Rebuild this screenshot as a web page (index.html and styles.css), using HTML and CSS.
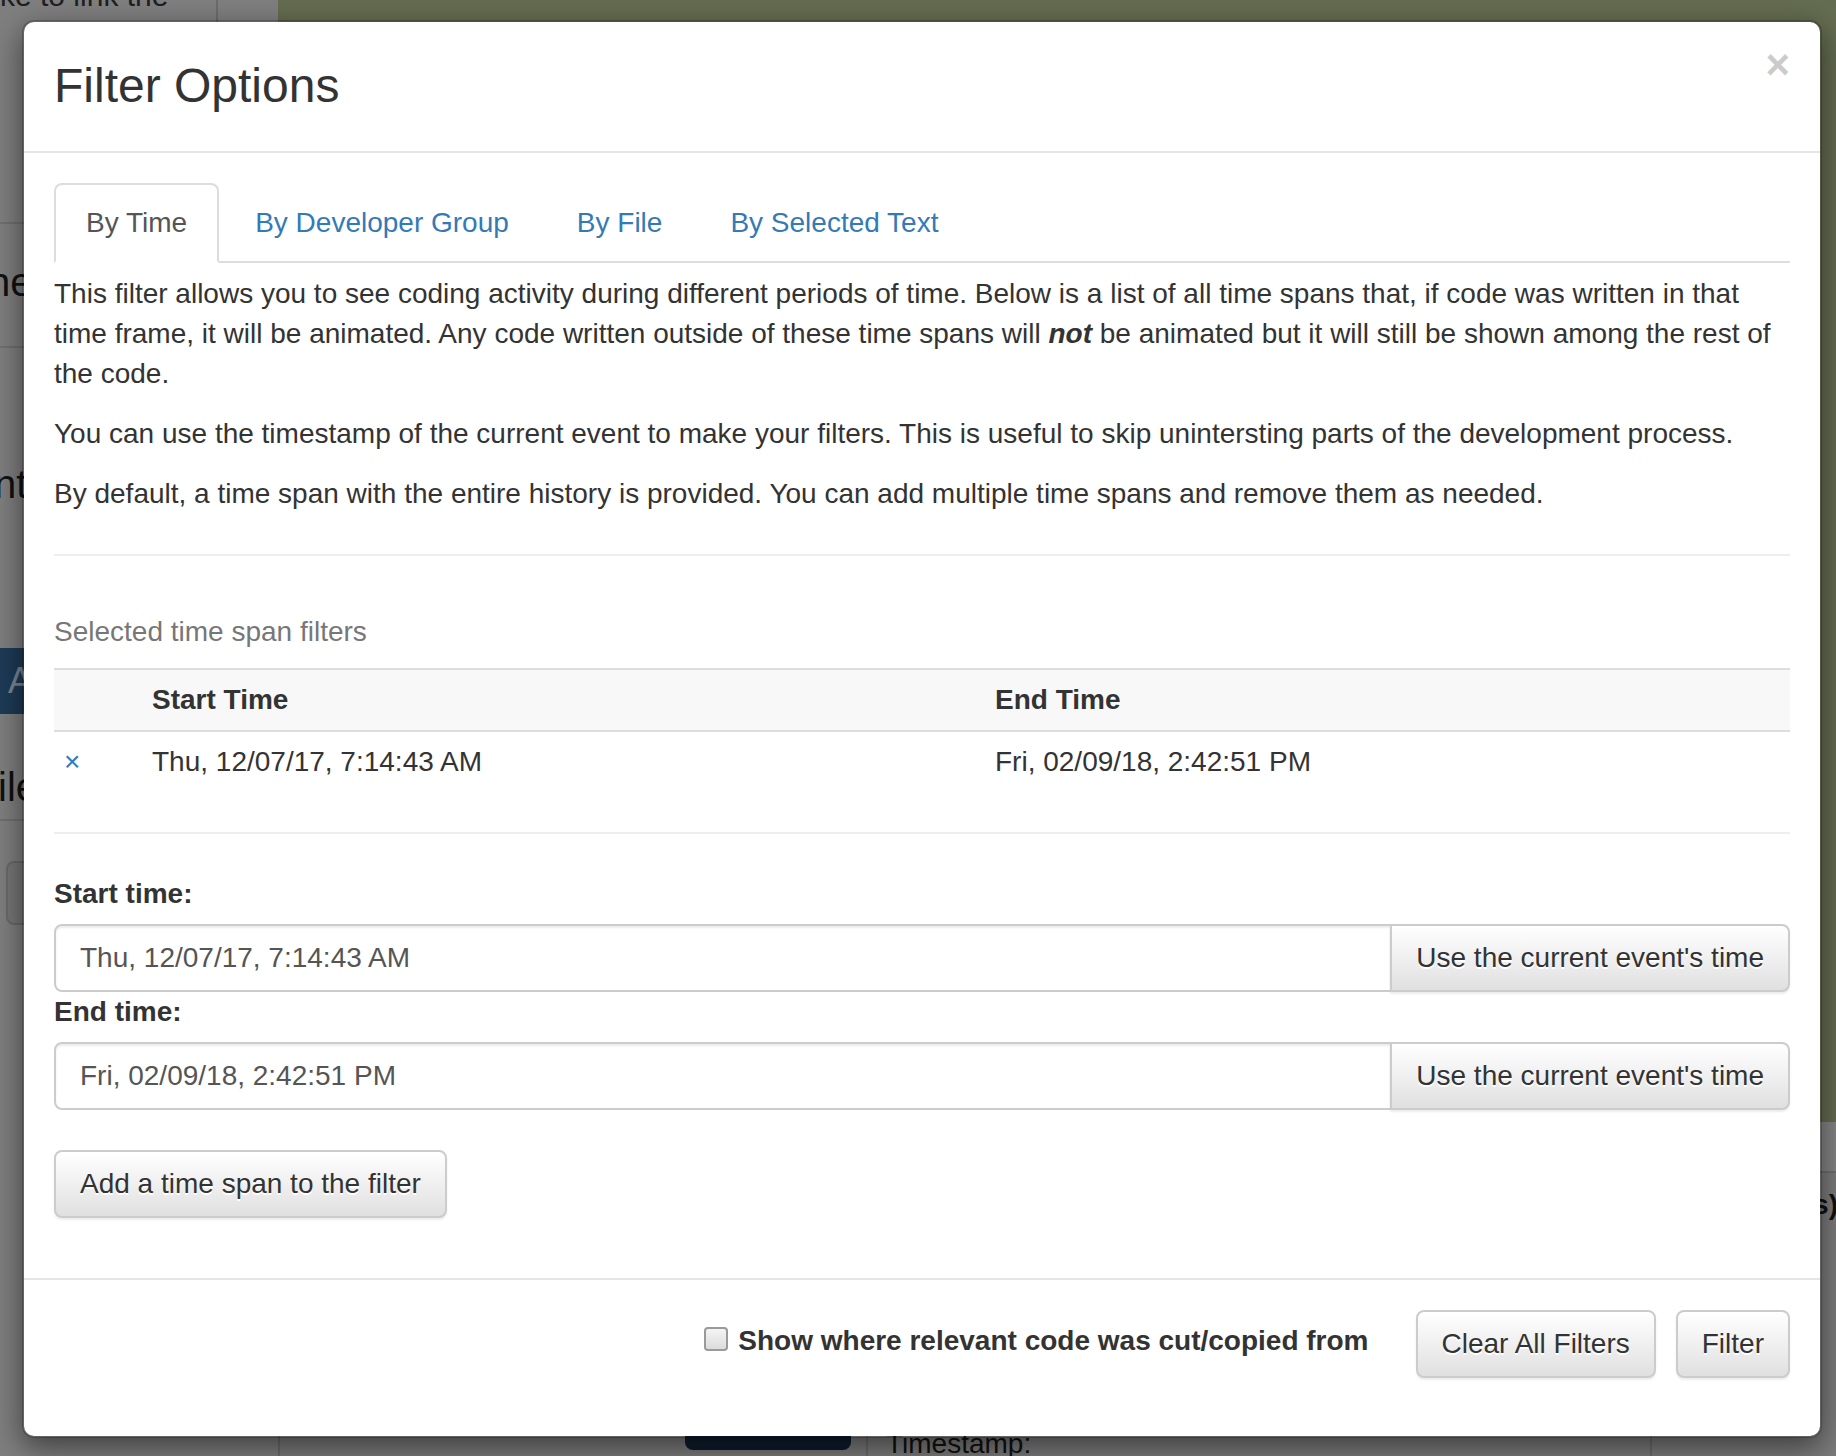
FILE: index.html
```html
<!DOCTYPE html>
<html lang="en">
<head>
<meta charset="utf-8">
<title>Filter Options</title>
<link rel="stylesheet" href="styles.css">
</head>
<body>
<div class="page">
  <aside class="side">
    <div class="side-top">
      <div class="side-field"><span class="side-note">ke to link the</span></div>
    </div>
    <div class="side-item side-item-a">ne</div>
    <div class="side-item side-item-b">nt</div>
    <div class="side-bar">A</div>
    <div class="side-item side-item-c">ile</div>
    <div class="side-btn"></div>
  </aside>
  <main class="main">
    <div class="editor"></div>
    <div class="panel">
      <div class="panel-head"></div>
      <div class="panel-body"><span class="panel-title">Selected Event(s)</span></div>
      <div class="panel-foot">
        <div class="foot-col foot-a"><span class="navy-btn"></span></div>
        <div class="foot-col foot-b">Timestamp:</div>
        <div class="foot-col foot-c"></div>
      </div>
    </div>
  </main>
</div>

<div class="backdrop">
  <div class="modal">
    <div class="modal-header">
      <h3 class="modal-title">Filter Options</h3>
      <button class="close" type="button">&times;</button>
    </div>
    <div class="modal-body">
      <ul class="nav-tabs">
        <li class="active"><a href="#">By Time</a></li>
        <li><a href="#">By Developer Group</a></li>
        <li><a href="#">By File</a></li>
        <li><a href="#">By Selected Text</a></li>
      </ul>
      <div class="tab-content">
        <p>This filter allows you to see coding activity during different periods of time. Below is a list of all time spans that, if code was written in that time frame, it will be animated. Any code written outside of these time spans will <b><i>not</i></b> be animated but it will still be shown among the rest of the code.</p>
        <p>You can use the timestamp of the current event to make your filters. This is useful to skip unintersting parts of the development process.</p>
        <p>By default, a time span with the entire history is provided. You can add multiple time spans and remove them as needed.</p>
        <hr class="rule">
        <table class="spans">
          <caption>Selected time span filters</caption>
          <colgroup>
            <col class="col-x">
            <col class="col-start">
            <col>
          </colgroup>
          <thead>
            <tr><th></th><th>Start Time</th><th>End Time</th></tr>
          </thead>
          <tbody>
            <tr><td><a href="#" class="remove">&times;</a></td><td>Thu, 12/07/17, 7:14:43 AM</td><td>Fri, 02/09/18, 2:42:51 PM</td></tr>
          </tbody>
        </table>
        <hr class="rule">
        <label class="field-label">Start time:</label>
        <div class="input-group">
          <input class="form-control" type="text" value="Thu, 12/07/17, 7:14:43 AM">
          <button class="btn btn-addon" type="button">Use the current event's time</button>
        </div>
        <label class="field-label">End time:</label>
        <div class="input-group">
          <input class="form-control" type="text" value="Fri, 02/09/18, 2:42:51 PM">
          <button class="btn btn-addon" type="button">Use the current event's time</button>
        </div>
        <div class="add-row">
          <button class="btn" type="button">Add a time span to the filter</button>
        </div>
      </div>
    </div>
    <div class="modal-footer">
      <label class="check-label"><input type="checkbox" class="check"><span>Show where relevant code was cut/copied from</span></label>
      <button class="btn" type="button">Clear All Filters</button>
      <button class="btn" type="button">Filter</button>
    </div>
  </div>
</div>
</body>
</html>
```

FILE: styles.css
```css
html, body {
  margin: 0;
  padding: 0;
}
body {
  width: 1836px;
  height: 1456px;
  overflow: hidden;
  position: relative;
  font-family: "Liberation Sans", Arial, Helvetica, sans-serif;
  font-size: 28px;
  line-height: 40px;
  color: #333;
  background: #7f7f7f;
}

/* ---------- dimmed page behind the modal ---------- */
.page {
  display: grid;
  grid-template-columns: 278px 1fr;
  height: 1456px;
}
.side {
  background: #7f7f7f;
  display: flex;
  flex-direction: column;
  overflow: hidden;
}
.side-top {
  height: 222px;
  border-bottom: 2px solid #707070;
  display: flex;
}
.side-field {
  width: 216px;
  border-right: 2px solid #6c6c6c;
  overflow: hidden;
}
.side-note {
  display: block;
  margin-top: -24px;
  font-size: 30px;
  color: #1f1f1f;
  white-space: nowrap;
}
.side-item {
  font-size: 40px;
  line-height: 56px;
  color: #111;
  white-space: nowrap;
}
.side-item-a {
  margin-left: -12px;
  padding: 30px 0 36px;
  border-bottom: 2px solid #707070;
}
.side-item-b {
  margin-left: -6px;
  padding: 108px 0 0;
  height: 192px;
}
.side-bar {
  height: 66px;
  background: #1e3b57;
  color: #7a8796;
  font-size: 36px;
  line-height: 66px;
  padding-left: 8px;
}
.side-item-c {
  margin-left: -2px;
  padding: 45px 0 4px;
  border-bottom: 2px solid #707070;
}
.side-btn {
  margin: 40px 0 0 6px;
  width: 200px;
  height: 64px;
  box-sizing: border-box;
  border: 2px solid #6a6a6a;
  border-radius: 8px;
  background: #777;
}
.main {
  display: flex;
  flex-direction: column;
}
.editor {
  height: 1122px;
  background: #646c51;
}
.panel {
  flex: 1;
  background: #7c7c7c;
  display: flex;
  flex-direction: column;
}
.panel-head {
  height: 49px;
  background: #858585;
  border-bottom: 2px solid #6e6e6e;
}
.panel-body {
  height: 170px;
  text-align: right;
  padding-top: 12px;
  box-sizing: border-box;
}
.panel-title {
  font-weight: 700;
  color: #111;
  margin-right: -2px;
}
.panel-foot {
  flex: 1;
  display: flex;
  border-left: 2px solid #6c6c6c;
}
.foot-col {
  box-sizing: border-box;
}
.foot-a {
  width: 588px;
  border-right: 2px solid #6c6c6c;
  padding-left: 405px;
}
.navy-btn {
  display: block;
  width: 166px;
  height: 62px;
  margin-top: 45px;
  background: #0c1d2d;
  border-radius: 8px;
}
.foot-b {
  width: 784px;
  border-right: 2px solid #6c6c6c;
  padding: 81px 0 0 18px;
  color: #111;
}
.foot-c {
  flex: 1;
}

/* ---------- modal ---------- */
.backdrop {
  position: absolute;
  inset: 0;
}
.modal {
  position: absolute;
  top: 20px;
  left: 22px;
  width: 1800px;
  box-sizing: border-box;
  background: #fff;
  border: 2px solid rgba(0, 0, 0, 0.2);
  border-radius: 12px;
  box-shadow: 0 10px 30px rgba(0, 0, 0, 0.5);
  background-clip: padding-box;
}
.modal-header {
  padding: 30px;
  border-bottom: 2px solid #e5e5e5;
  display: flex;
  justify-content: space-between;
  align-items: flex-start;
}
.modal-title {
  margin: 0;
  font-size: 48px;
  font-weight: 400;
  line-height: 68.57px;
  color: #333;
}
.close {
  margin-top: -8px;
  padding: 0;
  border: 0;
  background: transparent;
  font-family: "Liberation Sans", Arial, sans-serif;
  font-size: 42px;
  font-weight: 700;
  line-height: 1;
  color: #000;
  opacity: 0.2;
  text-shadow: 0 2px 0 #fff;
  cursor: pointer;
}
.modal-body {
  padding: 30px;
}
.nav-tabs {
  list-style: none;
  margin: 0;
  padding: 0;
  display: flex;
  border-bottom: 2px solid #ddd;
}
.nav-tabs li {
  margin: 0 4px -2px 0;
}
.nav-tabs a {
  display: block;
  padding: 18px 30px 18px;
  line-height: 40px;
  border: 2px solid transparent;
  border-radius: 8px 8px 0 0;
  color: #337ab7;
  text-decoration: none;
}
.nav-tabs .active a {
  color: #555;
  background: #fff;
  border-color: #ddd #ddd transparent;
}
.tab-content {
  padding-top: 11px;
}
.tab-content p {
  margin: 0 0 20px;
}
.rule {
  margin: 40px 0;
  border: 0;
  border-top: 2px solid #eee;
  height: 0;
}
.spans {
  width: 100%;
  border-collapse: collapse;
  table-layout: fixed;
  margin-bottom: 40px;
}
.spans caption {
  caption-side: top;
  text-align: left;
  padding: 16px 0;
  color: #777;
}
.col-x {
  width: 88px;
}
.col-start {
  width: 843px;
}
.spans th,
.spans td {
  padding: 10px;
  text-align: left;
  vertical-align: top;
  line-height: 40px;
}
.spans thead th {
  background: #f8f8f8;
  border-top: 2px solid #ddd;
  border-bottom: 2px solid #ddd;
  font-weight: 700;
}
.remove {
  color: #337ab7;
  text-decoration: none;
}
.field-label {
  display: block;
  font-weight: 700;
  margin-bottom: 10px;
}
.input-group {
  display: flex;
}
.form-control {
  flex: 1;
  min-width: 0;
  height: 68px;
  box-sizing: border-box;
  margin: 0;
  padding: 12px 24px;
  font-family: "Liberation Sans", Arial, sans-serif;
  font-size: 28px;
  line-height: 40px;
  color: #555;
  background: #fff;
  border: 2px solid #ccc;
  border-radius: 8px 0 0 8px;
  box-shadow: inset 0 2px 2px rgba(0, 0, 0, 0.075);
  outline: none;
}
.btn {
  display: inline-block;
  box-sizing: border-box;
  margin: 0;
  padding: 12px 24px;
  font-family: "Liberation Sans", Arial, sans-serif;
  font-size: 28px;
  line-height: 40px;
  color: #333;
  white-space: nowrap;
  background-color: #e6e6e6;
  background-image: linear-gradient(to bottom, #fff 0, #e0e0e0 100%);
  border: 2px solid #ccc;
  border-radius: 8px;
  text-shadow: 0 2px 0 #fff;
  box-shadow: inset 0 2px 0 rgba(255, 255, 255, 0.15), 0 2px 2px rgba(0, 0, 0, 0.075);
  cursor: pointer;
}
.btn-addon {
  margin-left: -2px;
  border-radius: 0 8px 8px 0;
}
.add-row {
  margin: 40px 0 30px;
}
.modal-footer {
  padding: 30px 30px 58px;
  border-top: 2px solid #e5e5e5;
  display: flex;
  justify-content: flex-end;
  align-items: center;
  gap: 20px;
}
.check-label {
  display: flex;
  align-items: center;
  gap: 10px;
  font-weight: 700;
  margin-right: 27px;
  margin-top: -6px;
}
.check {
  appearance: none;
  -webkit-appearance: none;
  width: 24px;
  height: 24px;
  margin: -4px 0 0;
  box-sizing: border-box;
  border: 2px solid #9a9a9a;
  border-radius: 4px;
  background: linear-gradient(to bottom, #f4f4f4, #dcdcdc);
}
```
